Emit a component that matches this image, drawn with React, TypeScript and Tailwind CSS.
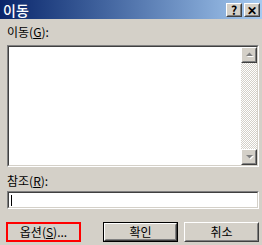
import React from "react";

const font = { fontFamily: '"Noto Sans CJK KR", "Noto Sans", sans-serif' };

function Raised({ className = "", children }: { className?: string; children?: React.ReactNode }) {
  return (
    <div className={`border border-t-white border-l-white border-r-[#404040] border-b-[#404040] ${className}`}>
      <div className="w-full h-full border border-t-[#d4d0c8] border-l-[#d4d0c8] border-r-[#808080] border-b-[#808080] flex items-center justify-center">
        {children}
      </div>
    </div>
  );
}

function Sunken({ className = "", children }: { className?: string; children?: React.ReactNode }) {
  return (
    <div className={`border border-t-[#808080] border-l-[#808080] border-r-white border-b-white ${className}`}>
      <div className="w-full h-full border border-t-[#404040] border-l-[#404040] border-r-[#d4d0c8] border-b-[#d4d0c8] bg-white flex">
        {children}
      </div>
    </div>
  );
}

function Arrow({ up }: { up?: boolean }) {
  return (
    <svg width="7" height="4" viewBox="0 0 7 4" className="overflow-visible">
      {up ? (
        <>
          <polygon points="1,4 8,4 4.5,0.5" fill="#ffffff" />
          <polygon points="0,3 7,3 3.5,-0.5" fill="#808080" />
        </>
      ) : (
        <>
          <polygon points="1,1 8,1 4.5,4.5" fill="#ffffff" />
          <polygon points="0,0 7,0 3.5,3.5" fill="#808080" />
        </>
      )}
    </svg>
  );
}

function CaptionButton({ children }: { children: React.ReactNode }) {
  return (
    <Raised className="w-[16px] h-[14px] bg-[#d4d0c8]">
      <span className="text-[12px] leading-none font-bold text-black">{children}</span>
    </Raised>
  );
}

export default function App() {
  return (
    <div className="w-[262px] h-[245px] bg-[#d4d0c8] text-black overflow-hidden" style={font}>
      <div className="h-[19px] bg-gradient-to-r from-[#0a246a] to-[#a6caf0] flex items-center justify-between pl-[3px] pr-[2px]">
        <span className="text-white text-[14px] font-medium leading-none">이동</span>
        <div className="flex">
          <CaptionButton>?</CaptionButton>
          <div className="w-[2px]" />
          <CaptionButton>✕</CaptionButton>
        </div>
      </div>

      <div className="px-[7px] pr-[3px]">
        <div className="h-[26px] pt-[6px] text-[12px] leading-[14px]">
          이동(<span className="underline">G</span>):
        </div>
        <Sunken className="h-[122px]">
          <div className="flex-1" />
          <div className="w-[16px] flex flex-col">
            <Raised className="w-[16px] h-[16px] bg-[#d4d0c8]">
              <Arrow up />
            </Raised>
            <div className="flex-1 bg-[repeating-conic-gradient(#d4d0c8_0%_25%,#ffffff_0%_50%)] bg-[length:2px_2px]" />
            <Raised className="w-[16px] h-[16px] bg-[#d4d0c8]">
              <Arrow />
            </Raised>
          </div>
        </Sunken>
        <div className="h-[24px] pt-[7px] text-[12px] leading-[14px]">
          참조(<span className="underline">R</span>):
        </div>
        <Sunken className="h-[18px]">
          <div className="ml-[2px] mt-[2px] w-[1px] h-[11px] bg-black" />
        </Sunken>
      </div>

      <div className="flex items-center mt-[13px] pl-[6px] text-[12px]">
        <div className="w-[75px] h-[20px] border-2 border-[#ff0000] flex items-center justify-center">
          옵션(<span className="underline">S</span>)...
        </div>
        <div className="ml-[22px] w-[75px] h-[20px] border border-black">
          <Raised className="w-full h-full">확인</Raised>
        </div>
        <Raised className="ml-[6px] w-[75px] h-[20px]">취소</Raised>
      </div>
    </div>
  );
}
